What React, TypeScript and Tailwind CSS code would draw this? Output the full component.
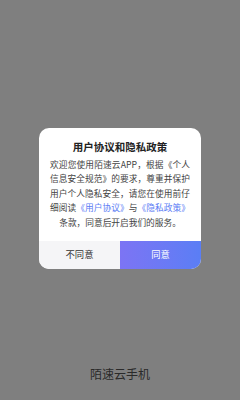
export default function App() {
  return (
    <div
      className="flex h-[400px] w-[240px] flex-col items-center bg-[#7f7f7f] pt-[128px]"
      style={{ fontFamily: '"Noto Sans CJK SC", "Noto Sans", sans-serif' }}
    >
      <div className="w-[162px] overflow-hidden rounded-[10px] bg-white">
        <div className="pt-[12px] text-center text-[10.5px] font-bold leading-[14px] text-[#222]">
          用户协议和隐私政策
        </div>
        <p className="px-[11px] pt-[4px] pb-[11px] text-justify text-[8.7px] leading-[14.4px] text-[#444] [text-align-last:center]">
          欢迎您使用陌速云APP，根据《个人信息安全规范》的要求，尊重并保护用户个人隐私安全，请您在使用前仔细阅读
          <span className="text-[#5b7cf5]">《用户协议》</span>与
          <span className="text-[#5b7cf5]">《隐私政策》</span>
          条款，同意后开启我们的服务。
        </p>
        <div className="flex h-[28px]">
          <button className="flex-1 bg-[#f5f5f7] text-[9.3px] text-[#333]">不同意</button>
          <button className="flex-1 bg-gradient-to-r from-[#7c74f4] to-[#5a7ef5] text-[9.3px] text-white">
            同意
          </button>
        </div>
      </div>
      <div className="mt-auto pb-[17px] text-[12px] leading-[18px] text-[#2a2a2a]">陌速云手机</div>
    </div>
  );
}
